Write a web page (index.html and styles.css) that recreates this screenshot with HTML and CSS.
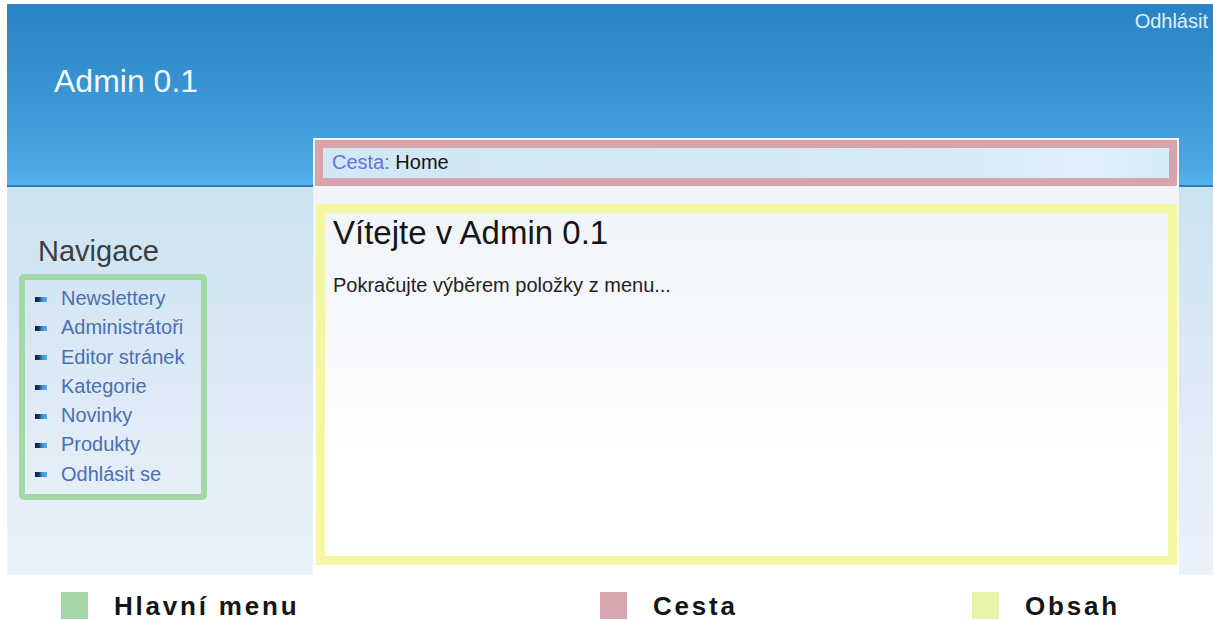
FILE: index.html
```html
<!DOCTYPE html>
<html lang="cs">
<head>
<meta charset="utf-8">
<title>Admin 0.1</title>
<link rel="stylesheet" href="styles.css">
</head>
<body>
<div class="page">
  <header class="header">
    <h1 class="brand">Admin 0.1</h1>
    <a class="logout" href="#">Odhlásit</a>
  </header>
  <div class="layout">
    <aside class="sidebar">
      <h2 class="sidebar-title">Navigace</h2>
      <ul class="menu">
        <li><a href="#">Newslettery</a></li>
        <li><a href="#">Administrátoři</a></li>
        <li><a href="#">Editor stránek</a></li>
        <li><a href="#">Kategorie</a></li>
        <li><a href="#">Novinky</a></li>
        <li><a href="#">Produkty</a></li>
        <li><a href="#">Odhlásit se</a></li>
      </ul>
    </aside>
    <main class="panel">
      <div class="crumbs"><span class="crumbs-label">Cesta:</span> Home</div>
      <section class="content">
        <h2 class="content-title">Vítejte v Admin 0.1</h2>
        <p class="content-text">Pokračujte výběrem položky z menu...</p>
      </section>
    </main>
    <div class="gutter"></div>
  </div>
</div>
<ul class="legend">
  <li class="legend-item"><span class="swatch swatch-menu"></span>Hlavní menu</li>
  <li class="legend-item"><span class="swatch swatch-path"></span>Cesta</li>
  <li class="legend-item"><span class="swatch swatch-content"></span>Obsah</li>
</ul>
</body>
</html>
```
FILE: styles.css
```css
* { box-sizing: border-box; }

html, body {
  margin: 0;
  padding: 0;
  background: #fff;
  font-family: "Liberation Sans", Arial, sans-serif;
}

body {
  width: 1213px;
  height: 620px;
  overflow: hidden;
  padding: 4px 0 0 7px;
}

.page {
  width: 1206px;
}

/* blue top bar */
.header {
  height: 183px;
  display: flex;
  justify-content: space-between;
  align-items: flex-start;
  padding: 0 5px 0 47px;
  background: linear-gradient(#2983c4 0%, #3893d2 45%, #4aa9e3 90%, #52b1ea 98%);
  border-bottom: 2px solid #2c7fbe;
}

.brand {
  margin: 59px 0 0;
  font-size: 32px;
  line-height: 37px;
  font-weight: normal;
  color: #f4f9fd;
}

.logout {
  margin-top: 6px;
  font-size: 20px;
  line-height: 23px;
  color: #e2eef8;
  text-decoration: none;
}

/* body row: sidebar, panel, right gutter */
.layout {
  display: flex;
  height: 388px;
  background: linear-gradient(#cce2f1 0%, #dbe9f5 45%, #ebf2fa 100%);
}

.sidebar {
  width: 306px;
  flex: none;
  padding: 48px 0 0 12px;
}

.sidebar-title {
  margin: 0 0 6px 19px;
  font-size: 29px;
  line-height: 33px;
  font-weight: normal;
  color: #3b3d40;
}

.menu {
  width: 188px;
  margin: 0;
  padding: 4px 0 5px 10px;
  list-style: none;
  border: 6px solid #a3d7a6;
  border-radius: 5px;
}

.menu li {
  display: flex;
  align-items: center;
  gap: 14px;
  font-size: 20px;
  line-height: 29.3px;
}

.menu li::before {
  content: "";
  width: 12px;
  height: 5px;
  flex: none;
  margin-top: 1px;
  background: linear-gradient(90deg, #0e1a36 0%, #1d3c6a 35%, #3f93d4 60%, #5aa9e2 100%);
}

.menu a {
  color: #4b6fb2;
  text-decoration: none;
}

/* white content panel overlapping the header */
.panel {
  width: 866px;
  flex: none;
  margin-top: -49px;
  padding: 1px 2px 10px 2px;
  display: flex;
  flex-direction: column;
  background: linear-gradient(#eef3f9 0%, #f4f7fb 35%, #ffffff 70%);
  border-top: 1px solid #f4f9fd;
}

.crumbs {
  height: 46px;
  padding-left: 9px;
  border: 8px solid #d8a3aa;
  background: linear-gradient(90deg, #d2e7f6 0%, #d6eaf7 75%, #e0f0fa 90%, #d5ebf8 100%);
  font-size: 20px;
  line-height: 29px;
  color: #141414;
}

.crumbs-label {
  color: #6b6fe0;
}

.content {
  flex: 1;
  margin: 18px 0 0 1px;
  padding: 1px 8px 0;
  border: 9px solid #f4f6a4;
}

.content-title {
  margin: 0;
  font-size: 33px;
  line-height: 38px;
  font-weight: normal;
  color: #151515;
}

.content-text {
  margin: 22px 0 0;
  font-size: 20px;
  line-height: 23px;
  color: #232323;
}

.gutter {
  flex: 1;
}

/* colour key under the page */
.legend {
  display: grid;
  grid-template-columns: 539px 372px auto;
  margin: 15px 0 0;
  padding: 0 0 0 54px;
  list-style: none;
}

.legend-item {
  display: flex;
  align-items: center;
  gap: 26px;
  padding-top: 3px;
  font-size: 26px;
  font-weight: bold;
  letter-spacing: 2.8px;
  line-height: 27px;
  color: #161616;
}

.swatch {
  width: 27px;
  height: 27px;
  flex: none;
  margin-top: -3px;
}

.swatch-menu { background: #a4d7a7; }
.swatch-path { background: #d7a5ae; }
.swatch-content { background: #e6f3a9; }
```
